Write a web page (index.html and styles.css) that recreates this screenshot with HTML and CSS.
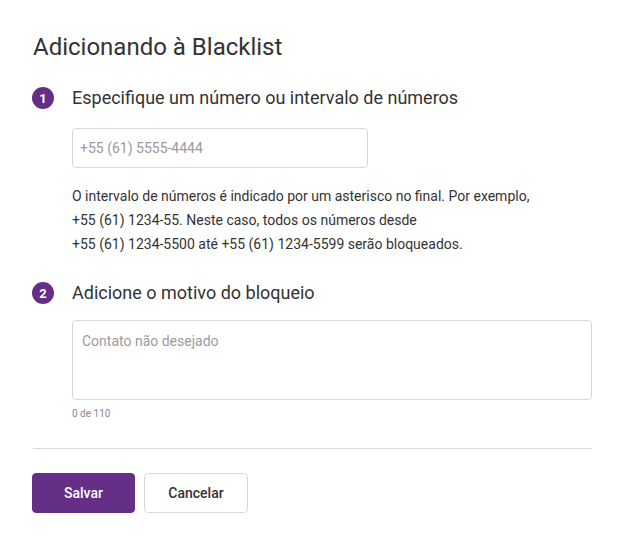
FILE: index.html
```html
<!DOCTYPE html>
<html lang="pt">
<head>
<meta charset="utf-8">
<link rel="stylesheet" href="styles.css">
</head>
<body>
<div class="page">
  <h1 class="title">Adicionando à Blacklist</h1>

  <div class="step">
    <span class="badge">1</span>
    <h2 class="step-title">Especifique um número ou intervalo de números</h2>
  </div>
  <div class="step-body">
    <input class="field" type="text" placeholder="+55 (61) 5555-4444">
    <p class="hint">O intervalo de números é indicado por um asterisco no final. Por exemplo,<br>+55 (61) 1234-55. Neste caso, todos os números desde<br>+55 (61) 1234-5500 até +55 (61) 1234-5599 serão bloqueados.</p>
  </div>

  <div class="step step-2">
    <span class="badge">2</span>
    <h2 class="step-title">Adicione o motivo do bloqueio</h2>
  </div>
  <div class="step-body">
    <textarea class="area" placeholder="Contato não desejado"></textarea>
    <div class="counter">0 de 110</div>
  </div>

  <hr class="divider">

  <div class="actions">
    <button class="btn btn-primary">Salvar</button>
    <button class="btn btn-secondary">Cancelar</button>
  </div>
</div>
</body>
</html>
```

FILE: styles.css
```css
* { box-sizing: border-box; }
html, body { margin: 0; padding: 0; background: #fff; }
body {
  font-family: Roboto, "Liberation Sans", Arial, sans-serif;
  color: #333;
}
.page {
  padding: 31px 32px 0 33px;
}
.title {
  margin: 0;
  font-size: 24px;
  line-height: 32px;
  font-weight: 400;
  color: #333;
}
.step {
  display: flex;
  align-items: center;
  gap: 18px;
  height: 24px;
  margin-top: 23px;
  margin-left: -1px;
}
.step-2 { margin-top: 25px; }
.badge {
  width: 22px;
  height: 22px;
  border-radius: 50%;
  background: #662d86;
  color: #fff;
  font-size: 13px;
  font-weight: 700;
  display: flex;
  align-items: center;
  justify-content: center;
  flex: none;
}
.step-title {
  margin: 0;
  font-size: 18px;
  line-height: 24px;
  font-weight: 400;
  color: #333;
}
.step-body {
  padding-left: 39px;
}
.field {
  display: block;
  margin-top: 18px;
  width: 296px;
  height: 40px;
  border: 1px solid #d9d9d9;
  border-radius: 4px;
  padding: 0 7px;
  font-family: inherit;
  font-size: 14px;
  color: #333;
  outline: none;
}
.field::placeholder, .area::placeholder { color: #9b9b9b; }
.hint {
  margin: 16px 0 0;
  font-size: 14px;
  line-height: 24px;
  color: #333;
}
.area {
  display: block;
  margin-top: 15px;
  width: 520px;
  height: 80px;
  border: 1px solid #d9d9d9;
  border-radius: 4px;
  padding: 11px 9px;
  font-family: inherit;
  font-size: 14px;
  line-height: 18px;
  resize: none;
  outline: none;
}
.counter {
  margin-top: 7px;
  font-size: 10px;
  line-height: 14px;
  color: #888;
}
.divider {
  margin: 27px 0 0;
  border: 0;
  border-top: 1px solid #dcdcdc;
  height: 0;
}
.actions {
  display: flex;
  gap: 9px;
  margin-top: 24px;
  margin-left: -1px;
}
.btn {
  width: 103px;
  height: 40px;
  border-radius: 4px;
  font-family: inherit;
  font-size: 14px;
  font-weight: 500;
  cursor: pointer;
}
.btn-primary {
  background: #652f87;
  border: 1px solid #652f87;
  color: #fff;
}
.btn-secondary {
  width: 104px;
  background: #fff;
  border: 1px solid #d9d9d9;
  color: #333;
}
```
